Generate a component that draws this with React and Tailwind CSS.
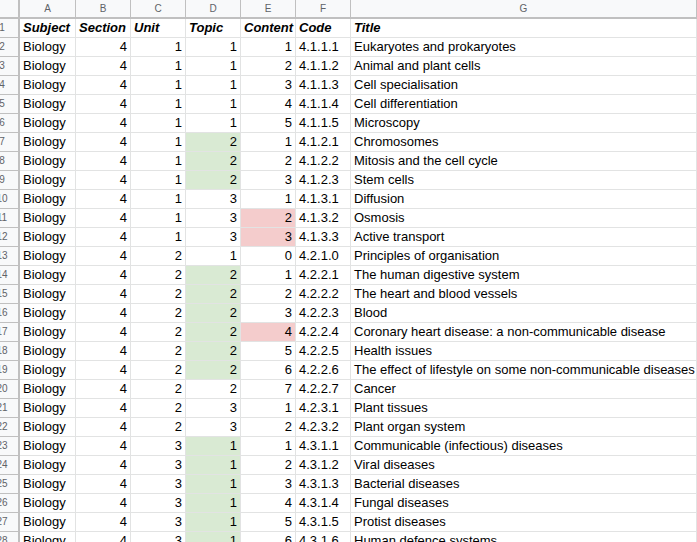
const rows = [
  [4, 1, 1, 1, '4.1.1.1', 'Eukaryotes and prokaryotes'],
  [4, 1, 1, 2, '4.1.1.2', 'Animal and plant cells'],
  [4, 1, 1, 3, '4.1.1.3', 'Cell specialisation'],
  [4, 1, 1, 4, '4.1.1.4', 'Cell differentiation'],
  [4, 1, 1, 5, '4.1.1.5', 'Microscopy'],
  [4, 1, 2, 1, '4.1.2.1', 'Chromosomes', 'g'],
  [4, 1, 2, 2, '4.1.2.2', 'Mitosis and the cell cycle', 'g'],
  [4, 1, 2, 3, '4.1.2.3', 'Stem cells', 'g'],
  [4, 1, 3, 1, '4.1.3.1', 'Diffusion'],
  [4, 1, 3, 2, '4.1.3.2', 'Osmosis', 'r'],
  [4, 1, 3, 3, '4.1.3.3', 'Active transport', 'r'],
  [4, 2, 1, 0, '4.2.1.0', 'Principles of organisation'],
  [4, 2, 2, 1, '4.2.2.1', 'The human digestive system', 'g'],
  [4, 2, 2, 2, '4.2.2.2', 'The heart and blood vessels', 'g'],
  [4, 2, 2, 3, '4.2.2.3', 'Blood', 'g'],
  [4, 2, 2, 4, '4.2.2.4', 'Coronary heart disease: a non-communicable disease', 'gr'],
  [4, 2, 2, 5, '4.2.2.5', 'Health issues', 'g'],
  [4, 2, 2, 6, '4.2.2.6', 'The effect of lifestyle on some non-communicable diseases', 'g'],
  [4, 2, 2, 7, '4.2.2.7', 'Cancer'],
  [4, 2, 3, 1, '4.2.3.1', 'Plant tissues'],
  [4, 2, 3, 2, '4.2.3.2', 'Plant organ system'],
  [4, 3, 1, 1, '4.3.1.1', 'Communicable (infectious) diseases', 'g'],
  [4, 3, 1, 2, '4.3.1.2', 'Viral diseases', 'g'],
  [4, 3, 1, 3, '4.3.1.3', 'Bacterial diseases', 'g'],
  [4, 3, 1, 4, '4.3.1.4', 'Fungal diseases', 'g'],
  [4, 3, 1, 5, '4.3.1.5', 'Protist diseases', 'g'],
  [4, 3, 1, 6, '4.3.1.6', 'Human defence systems', 'g'],
];

const letters = ['A', 'B', 'C', 'D', 'E', 'F', 'G'];
const widths = ['w-[56px]', 'w-[55px]', 'w-[55px]', 'w-[55px]', 'w-[55px]', 'w-[55px]', 'w-[346px]'];
const cell = 'h-[19px] shrink-0 border-r border-b border-[#e2e3e3] px-[3px] leading-[18px] whitespace-nowrap overflow-visible';

function RowNum({ n }) {
  return (
    <div className="h-[19px] w-[18px] shrink-0 overflow-hidden border-b border-[#c0c0c0] bg-[#f8f9fa] text-[10px] leading-[18px] text-[#5f6368]">
      <div className="ml-[-21px] w-[46px] text-center">{n}</div>
    </div>
  );
}

export default function App() {
  return (
    <div className="h-[542px] w-[697px] overflow-hidden bg-white text-[13px] text-black" style={{ fontFamily: '"Liberation Sans", Arial, sans-serif' }}>
      <div className="box-content flex h-[17px] border-b-[2px] border-[#c0c0c0]">
        <div className="box-content h-[17px] w-[18px] shrink-0 border-r-[2px] border-[#c0c0c0] bg-[#f8f9fa]" />
        {letters.map((l, i) => (
          <div key={l} className={`${widths[i]} h-[17px] shrink-0 border-r border-[#c0c0c0] bg-[#f8f9fa] text-center text-[10px] leading-[17px] text-[#5f6368]`}>
            {l}
          </div>
        ))}
      </div>
      <div className="flex">
        <div className="flex shrink-0 flex-col border-r-[2px] border-[#c0c0c0]">
          {Array.from({ length: 28 }, (_, i) => (
            <RowNum key={i} n={i + 1} />
          ))}
        </div>
        <div className="flex flex-col">
          <div className="flex font-bold italic">
            {['Subject', 'Section', 'Unit', 'Topic', 'Content', 'Code', 'Title'].map((t, i) => (
              <div key={t} className={`${cell} ${widths[i]}`}>{t}</div>
            ))}
          </div>
          {rows.map((r, idx) => {
            const [s, u, t, c, code, title, mark = ''] = r;
            return (
              <div key={idx} className="flex">
                <div className={`${cell} ${widths[0]}`}>Biology</div>
                <div className={`${cell} ${widths[1]} text-right`}>{s}</div>
                <div className={`${cell} ${widths[2]} text-right`}>{u}</div>
                <div className={`${cell} ${widths[3]} text-right ${mark.includes('g') ? 'bg-[#d9ead3]' : ''}`}>{t}</div>
                <div className={`${cell} ${widths[4]} text-right ${mark.includes('r') ? 'bg-[#f4cccc]' : ''}`}>{c}</div>
                <div className={`${cell} ${widths[5]}`}>{code}</div>
                <div className={`${cell} ${widths[6]}`}>{title}</div>
              </div>
            );
          })}
        </div>
      </div>
    </div>
  );
}
